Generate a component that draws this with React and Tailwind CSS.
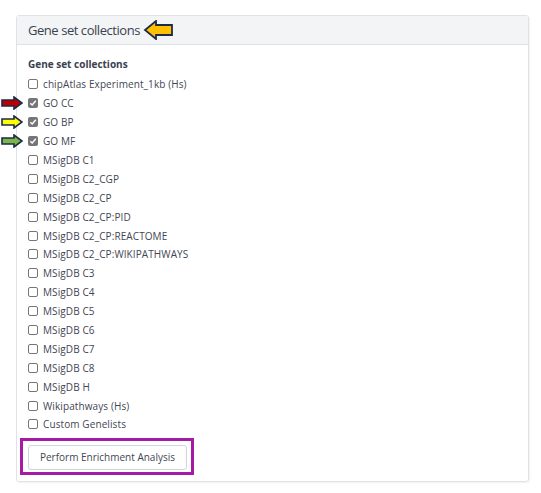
const collections = [
  { name: 'chipAtlas Experiment_1kb (Hs)', checked: false },
  { name: 'GO CC', checked: true, arrow: '#c00000' },
  { name: 'GO BP', checked: true, arrow: '#ffff00' },
  { name: 'GO MF', checked: true, arrow: '#7ab648' },
  { name: 'MSigDB C1' },
  { name: 'MSigDB C2_CGP' },
  { name: 'MSigDB C2_CP' },
  { name: 'MSigDB C2_CP:PID' },
  { name: 'MSigDB C2_CP:REACTOME' },
  { name: 'MSigDB C2_CP:WIKIPATHWAYS' },
  { name: 'MSigDB C3' },
  { name: 'MSigDB C4' },
  { name: 'MSigDB C5' },
  { name: 'MSigDB C6' },
  { name: 'MSigDB C7' },
  { name: 'MSigDB C8' },
  { name: 'MSigDB H' },
  { name: 'Wikipathways (Hs)' },
  { name: 'Custom Genelists' },
];

function Arrow({ color }) {
  return (
    <svg width="22" height="14" viewBox="0 0 22 14">
      <polygon
        points="1,4 13,4 13,1 21,7 13,13 13,10 1,10"
        fill={color}
        stroke="#1c2b4a"
        strokeWidth="1.6"
      />
    </svg>
  );
}

function Checkbox({ checked }) {
  if (checked) {
    return (
      <span className="w-[10px] h-[10px] rounded-[2px] bg-[#767676] flex items-center justify-center">
        <svg width="8" height="8" viewBox="0 0 8 8">
          <path d="M1.3 4.2 L3.2 6 L6.8 1.8" fill="none" stroke="#fff" strokeWidth="1.4" />
        </svg>
      </span>
    );
  }
  return <span className="w-[10px] h-[10px] rounded-[2px] border border-[#767676] bg-white" />;
}

export default function App() {
  return (
    <div className="w-[541px] h-[493px] bg-white pt-[15px] pl-[16px] font-['Open_Sans',sans-serif] text-[#3f4654]">
      <div className="w-[513px] border border-[#dfe2e7] rounded-[3px] shadow-[1px_1px_2px_rgba(0,0,0,0.06)]">
        <div className="h-[29px] bg-[#f3f4f6] border-b border-[#dfe2e7] flex items-center pl-[11px] relative">
          <span className="text-[13px] leading-none tracking-[-0.45px] text-[#3a4250]">Gene set collections</span>
          <span className="absolute left-[126px] top-[4px]">
            <svg width="30" height="20" viewBox="0 0 30 20">
              <polygon
                points="29,5 13,5 13,1 2,10 13,19 13,15 29,15"
                fill="#ffc000"
                stroke="#1c2b4a"
                strokeWidth="1.8"
              />
            </svg>
          </span>
        </div>
        <div className="pl-[11px] pt-[12px] pb-[11px]">
          <div className="text-[10px] font-bold leading-[14px] text-[#3a4250] mb-[4px]">Gene set collections</div>
          <div className="flex flex-col">
            {collections.map((c) => (
              <div key={c.name} className="h-[18.9px] flex items-center gap-[5px] relative">
                {c.arrow && (
                  <span className="absolute left-[-27px] top-[2px]">
                    <Arrow color={c.arrow} />
                  </span>
                )}
                <Checkbox checked={c.checked} />
                <span className="text-[10px] leading-none tracking-[0.1px]">{c.name}</span>
              </div>
            ))}
          </div>
          <div className="mt-[9px] relative w-fit">
            <span className="absolute -left-[8px] -top-[5px] -right-[7px] -bottom-[5px] border-[3px] border-[#a51ba3]" />
            <button className="h-[25px] w-[159px] border border-[#cfd4dc] rounded-[3px] bg-white text-[10px] text-[#3f4654]">
              Perform Enrichment Analysis
            </button>
          </div>
        </div>
      </div>
    </div>
  );
}
